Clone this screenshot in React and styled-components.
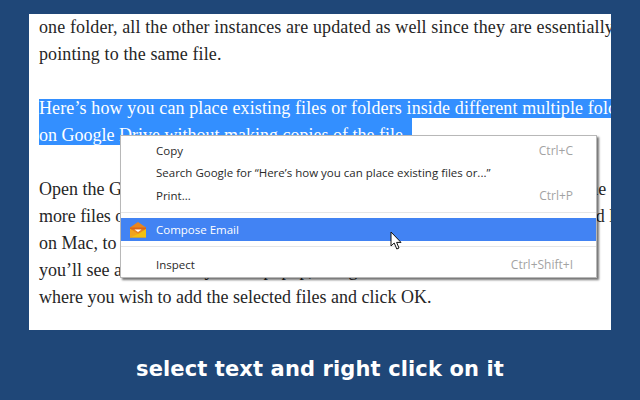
import React from 'react'
import styled, { createGlobalStyle } from 'styled-components'

const GlobalStyle = createGlobalStyle`
  html, body {
    margin: 0;
    padding: 0;
    background: #1f4778;
  }
`

const Page = styled.div`
  position: relative;
  width: 640px;
  height: 400px;
  padding-top: 14px;
  box-sizing: border-box;
  overflow: hidden;
  display: flex;
  flex-direction: column;
  background: #1f4778;
`

const Article = styled.div`
  width: 582px;
  height: 316px;
  margin-left: 29px;
  padding-left: 10px;
  box-sizing: border-box;
  overflow: hidden;
  background: #fff;
  font-family: "Liberation Serif", serif;
  font-size: 18px;
  color: #262626;
`

const Line = styled.div`
  height: 27px;
  line-height: 27px;
  letter-spacing: ${props => props.$tracking || 0}px;
  white-space: nowrap;
`

const Selected = styled.div`
  height: ${props => props.$height}px;
  line-height: ${props => props.$lineHeight}px;
  width: ${props => props.$width}px;
  margin: ${props => props.$margin};
  letter-spacing: ${props => props.$tracking || 0}px;
  background: #338fff;
  color: #fff;
  white-space: nowrap;
`

const Menu = styled.div`
  position: absolute;
  top: 135px;
  left: 120px;
  width: 477px;
  height: 143px;
  box-sizing: border-box;
  padding-top: 4px;
  background: #fff;
  border: 1px solid #b8b8b8;
  box-shadow: 2px 2px 2px rgba(0, 0, 0, 0.55);
  font-family: "Open Sans", sans-serif;
  font-size: 11.5px;
  color: #2a2a2a;
`

const Item = styled.div`
  position: relative;
  display: flex;
  align-items: center;
  justify-content: space-between;
  height: ${props => props.$height}px;
  padding: 0 23px 0 35px;
  background: ${props => props.$active ? '#4283f3' : 'transparent'};
  color: ${props => props.$active ? '#fff' : 'inherit'};
`

const Shortcut = styled.span`
  color: #a3a3a3;
  font-size: 12px;
`

const Separator = styled.div`
  height: 1px;
  margin: ${props => props.$margin};
  background: #e6e6e6;
`

const IconSlot = styled.span`
  position: absolute;
  left: 9px;
  top: 4px;
  width: 16px;
  height: 16px;
`

const Pointer = styled.span`
  position: absolute;
  left: 390px;
  top: 231px;
  line-height: 0;
`

const Caption = styled.div`
  flex: 1;
  display: flex;
  align-items: center;
  justify-content: center;
  padding-top: 8px;
  font-family: "DejaVu Sans", sans-serif;
  font-weight: 700;
  font-size: 21px;
  letter-spacing: 0.12px;
  color: #fff;
`

const MailIcon = () => (
  <svg width="16" height="16" viewBox="0 0 16 16">
    <path d="M0 5.5 L8 0 L16 5.5 V15.5 H0 Z" fill="#e8851f" />
    <path d="M0 5.5 H16 V7.5 H0 Z" fill="#d9651a" />
    <path d="M0 7 L8 12 L16 7 V15.5 H0 Z" fill="#f2c011" />
    <path d="M0 7 L8 12 L0 15.5 Z" fill="#f0a41e" />
    <path d="M4.5 7.5 H11.5 L8 10 Z" fill="#fff" />
  </svg>
)

const MouseCursor = () => (
  <svg width="14" height="20" viewBox="0 0 14 20">
    <path d="M1 1 L1 15 L4.2 12 L6.8 18 L9 17 L6.6 11.4 L11 11.4 Z" fill="#fff" stroke="#111" strokeWidth="1" />
  </svg>
)

export default function App() {
  return (
    <Page>
      <GlobalStyle />
      <Article>
        <Line $tracking={0.12}>one folder, all the other instances are updated as well since they are essentially</Line>
        <Line $tracking={0.12}>pointing to the same file.</Line>
        <Line />
        <Selected $height={19} $lineHeight={19} $width={572} $margin="4px 0 0" $tracking={0.12}>Here’s how you can place existing files or folders inside different multiple folders</Selected>
        <Selected $height={27} $lineHeight={35} $width={373} $margin="0 0 4px">on Google Drive without making copies of the file.</Selected>
        <Line />
        <Line>Open the Google Drive website, select one or more files and then use the same c</Line>
        <Line $tracking={-0.07}>more files or folders that you wish to add to multiple folders and hold Shift and l</Line>
        <Line>on Mac, to open the Add to My Drive popup for the selected items and then,</Line>
        <Line>you’ll see an Add to My Drive popup, navigate to the folder in the list</Line>
        <Line>where you wish to add the selected files and click OK.</Line>
      </Article>
      <Menu>
        <Item $height={21}>Copy<Shortcut>Ctrl+C</Shortcut></Item>
        <Item $height={23}>Search Google for “Here’s how you can place existing files or...”</Item>
        <Item $height={23}>Print...<Shortcut>Ctrl+P</Shortcut></Item>
        <Separator $margin="5px 0" />
        <Item $height={23} $active><IconSlot><MailIcon /></IconSlot>Compose Email</Item>
        <Separator $margin="5px 0 7px" />
        <Item $height={21}>Inspect<Shortcut>Ctrl+Shift+I</Shortcut></Item>
      </Menu>
      <Pointer><MouseCursor /></Pointer>
      <Caption>select text and right click on it</Caption>
    </Page>
  )
}
